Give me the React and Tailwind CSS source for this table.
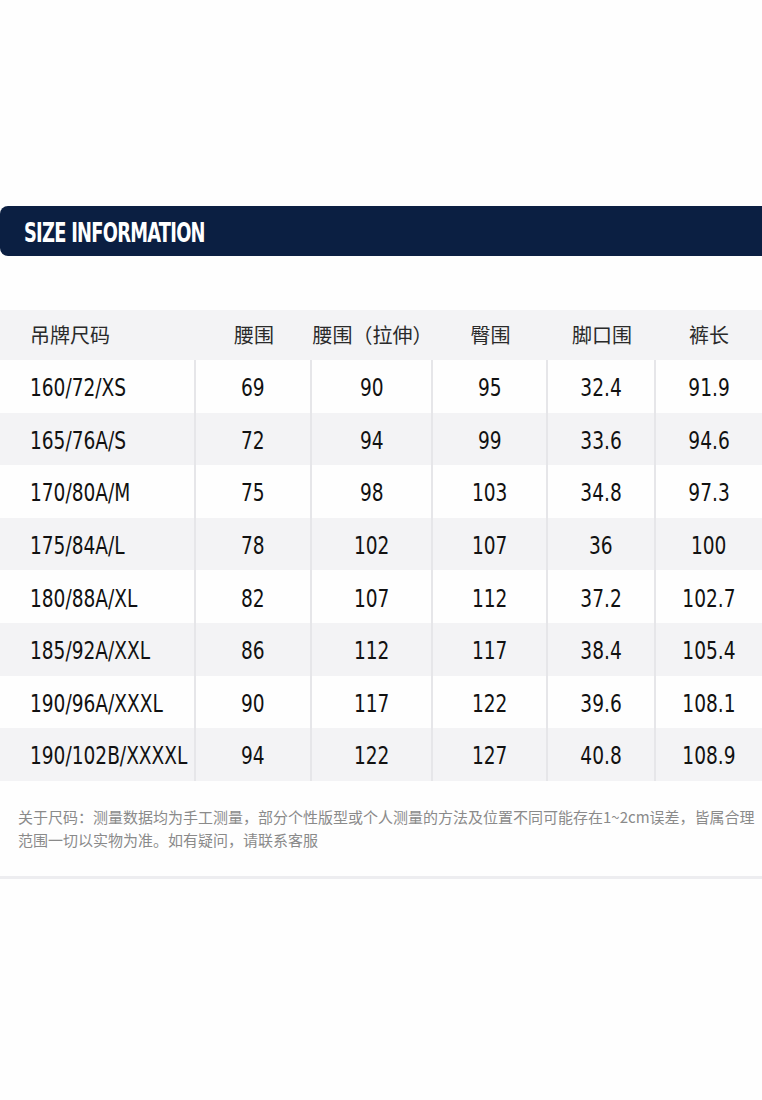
const cols = [
    { label: "吊牌尺码", w: "w-[196px]" },
    { label: "腰围", w: "w-[116px]" },
    { label: "腰围（拉伸）", w: "w-[121px]" },
    { label: "臀围", w: "w-[115px]" },
    { label: "脚口围", w: "w-[108px]" },
    { label: "裤长", w: "flex-1" },
];

const rows = [
    ["160/72/XS", "69", "90", "95", "32.4", "91.9"],
    ["165/76A/S", "72", "94", "99", "33.6", "94.6"],
    ["170/80A/M", "75", "98", "103", "34.8", "97.3"],
    ["175/84A/L", "78", "102", "107", "36", "100"],
    ["180/88A/XL", "82", "107", "112", "37.2", "102.7"],
    ["185/92A/XXL", "86", "112", "117", "38.4", "105.4"],
    ["190/96A/XXXL", "90", "117", "122", "39.6", "108.1"],
    ["190/102B/XXXXL", "94", "122", "127", "40.8", "108.9"],
];

const cjk = "font-['Noto_Sans_CJK_SC',sans-serif]";
const narrow = "font-['DejaVu_Sans',sans-serif] font-stretch-condensed";

export default function App() {
    return (
        <div className="w-[762px] h-[1100px] bg-[#fefefe] pt-[206px]">
            <div className="h-[50px] bg-[#0b1f42] rounded-l-[8px] flex items-center pl-[24px]">
                <h1
                    className={`${narrow} font-bold text-white text-[27px] tracking-[-1px] leading-none pt-[2px] origin-left scale-x-[0.735] whitespace-nowrap`}
                >
                    SIZE INFORMATION
                </h1>
            </div>

            <div className="mt-[54px]">
                <div className="flex h-[50px] bg-[#f3f3f5] items-center">
                    {cols.map((c, i) => (
                        <div
                            key={c.label}
                            className={`${c.w} ${cjk} text-[20px] text-[#2a2a2a] ${i === 0 ? "pl-[30px]" : "text-center"}`}
                        >
                            {c.label}
                        </div>
                    ))}
                </div>
                {rows.map((r, ri) => (
                    <div
                        key={r[0]}
                        className={`flex h-[52.6px] ${ri % 2 === 1 ? "bg-[#f3f3f5]" : "bg-[#fefefe]"}`}
                    >
                        {r.map((v, i) => (
                            <div
                                key={i}
                                className={`${cols[i].w} flex items-center ${narrow} text-[24px] text-[#111] pt-[4px] ${
                                    i === 0 ? "pl-[30px]" : "justify-center"
                                } ${i < 5 ? "border-r-2 border-[#e6e6e9]" : ""}`}
                            >
                                <span className={`inline-block whitespace-nowrap scale-x-[0.86] ${i === 0 ? "origin-left" : "origin-center"}`}>
                                    {v}
                                </span>
                            </div>
                        ))}
                    </div>
                ))}
            </div>

            <div className={`${cjk} text-[15px] leading-[23px] text-[#8a8a8a] pl-[18px] pt-[24px] pb-[25px] whitespace-nowrap`}>
                <p>关于尺码：测量数据均为手工测量，部分个性版型或个人测量的方法及位置不同可能存在1~2cm误差，皆属合理</p>
                <p>范围一切以实物为准。如有疑问，请联系客服</p>
            </div>
            <div className="h-[3px] bg-[#ededf0]" />
        </div>
    );
}
